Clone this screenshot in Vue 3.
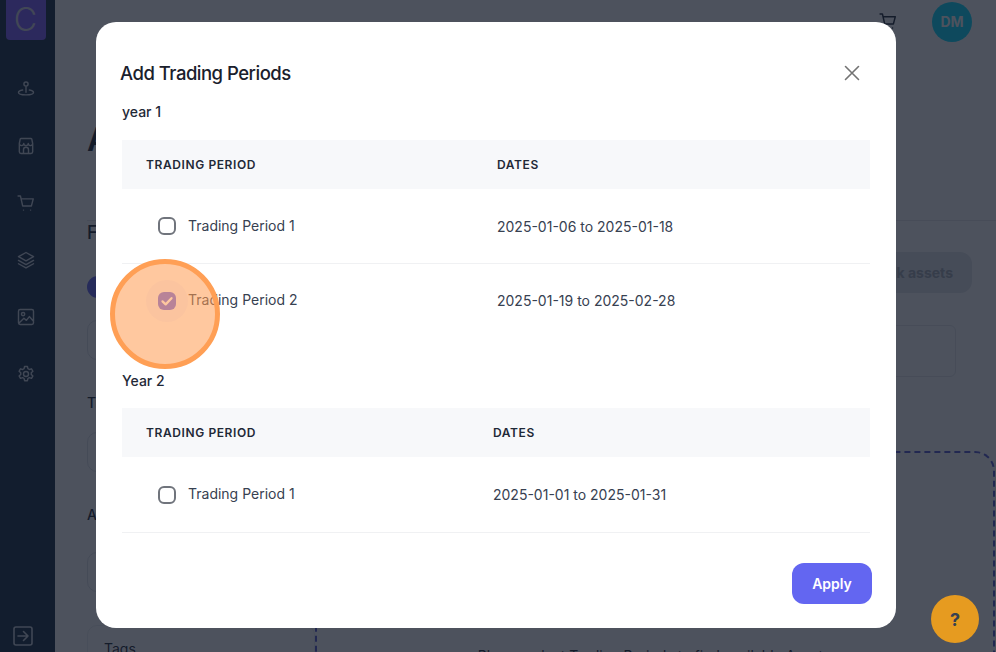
<script setup>
const navIcons = [
  'M12 8.500a2.500 2.500 0 1 0 0-5 2.500 2.500 0 0 0 0 5zM12 8.500V16M8 13.200c-2.900.5-5 1.600-5 2.900C3 17.700 7 19 12 19s9-1.300 9-2.900c0-1.300-2.100-2.400-5-2.900',
  'M4 9V19a2 2 0 0 0 2 2h12a2 2 0 0 0 2-2V9M4 9l1-5a1 1 0 0 1 1-1h12a1 1 0 0 1 1 1l1 5M4 9c0 1.500 1.200 2.500 2.700 2.500S9.300 10.500 9.300 9c0 1.500 1.200 2.500 2.700 2.500S14.700 10.500 14.700 9c0 1.500 1.100 2.500 2.600 2.500S20 10.500 20 9M9 21v-4.500a3 3 0 0 1 6 0V21',
  'M2.500 3.500h2.800L8 15.500h10.500l2.200-8.500H6M9 20.500h.01M17.500 20.500h.01',
  'M12 3l9 5-9 5-9-5 9-5zM3 12.500l9 5 9-5M3 16.500l9 5 9-5',
  'M5 3h14a2 2 0 0 1 2 2v14a2 2 0 0 1-2 2H5a2 2 0 0 1-2-2V5a2 2 0 0 1 2-2zM8.500 10.500a2 2 0 1 0 0-4 2 2 0 0 0 0 4zM4 19l5.500-5.500 3 2.500 3.500-4.500 5 5.500',
  'M12 15a3 3 0 1 0 0-6 3 3 0 0 0 0 6zM10.300 3h3.400l.6 2.600 1.700 1 2.600-.8 1.700 2.900-2 1.800v2l2 1.800-1.700 2.900-2.600-.8-1.700 1-.6 2.600h-3.400l-.6-2.600-1.700-1-2.600.8-1.700-2.900 2-1.800v-2l-2-1.800 1.700-2.900 2.600.8 1.700-1z'
]

const groups = [
  {
    title: 'year 1',
    nameWidth: '375px',
    rows: [
      { name: 'Trading Period 1', dates: '2025-01-06 to 2025-01-18', checked: false, line: true },
      { name: 'Trading Period 2', dates: '2025-01-19 to 2025-02-28', checked: true, line: false }
    ]
  },
  {
    title: 'Year 2',
    nameWidth: '371px',
    rows: [
      { name: 'Trading Period 1', dates: '2025-01-01 to 2025-01-31', checked: false, line: true }
    ]
  }
]
</script>

<template>
  <div class="page">
    <aside class="sidebar">
      <div class="logo">C</div>
      <svg v-for="(d, i) in navIcons" :key="i" class="nav-icon" viewBox="0 0 24 24">
        <path :d="d" />
      </svg>
      <svg class="collapse-icon" viewBox="0 0 24 24">
        <rect x="3" y="3" width="18" height="18" rx="2" />
        <path d="M7 12h10M12.500 7.500L17 12l-4.500 4.500" />
      </svg>
    </aside>

    <main class="main">
      <header class="topbar">
        <svg class="cart" viewBox="0 0 24 24">
          <path d="M2.500 3.500h2.800L8 15.500h10.500l2.200-8.500H6M9 20.500h.01M17.500 20.500h.01" />
        </svg>
        <div class="avatar">DM</div>
      </header>

      <h1 class="page-title">Add Assets</h1>
      <div class="divider"></div>

      <div class="content">
        <section class="filters">
          <h2 class="filter-title">Filters</h2>
          <div class="pill"></div>
          <div class="field"></div>
          <p class="field-label">Trading Period</p>
          <div class="field"></div>
          <p class="field-label second">Asset Type</p>
          <div class="field"></div>
          <div class="tags-box">Tags</div>
        </section>

        <section class="results">
          <div class="bulk-row"><button class="bulk">Bulk assets</button></div>
          <div class="search-card"></div>
          <div class="dashed">
            <p>Please select Trading Periods to find available Assets</p>
          </div>
        </section>
      </div>
    </main>

    <div class="overlay">
      <div class="modal">
        <div class="modal-head">
          <h3>Add Trading Periods</h3>
          <svg class="close" viewBox="0 0 16 16"><path d="M1.500 1.500l13 13M14.500 1.500l-13 13" /></svg>
        </div>

        <div v-for="group in groups" :key="group.title" class="group">
          <div class="group-title">{{ group.title }}</div>
          <div class="thead">
            <div class="th" :style="{ width: group.nameWidth }">TRADING PERIOD</div>
            <div class="th">DATES</div>
          </div>
          <div v-for="row in group.rows" :key="row.name" class="row" :class="{ line: row.line }">
            <div class="cell-name" :style="{ width: group.nameWidth }">
              <span class="check" :class="{ on: row.checked }">
                <svg v-if="row.checked" viewBox="0 0 16 16"><path d="M4 8.300l2.800 2.700L12 5.500" /></svg>
              </span>
              <span>{{ row.name }}</span>
            </div>
            <div class="cell-dates">{{ row.dates }}</div>
          </div>
        </div>

        <div class="modal-foot">
          <button class="apply">Apply</button>
        </div>
      </div>
    </div>

    <div class="spotlight"></div>
    <button class="help">?</button>
  </div>
</template>

<style>
html, body {
  margin: 0;
  overflow: hidden;
}
</style>

<style scoped>
.page {
  position: relative;
  display: flex;
  width: 996px;
  height: 652px;
  overflow: hidden;
  background: #fff;
  font-family: Inter, "Liberation Sans", sans-serif;
  color: #1f2937;
}

/* sidebar */
.sidebar {
  flex: none;
  width: 55px;
  height: 652px;
  box-sizing: border-box;
  padding-right: 4px;
  background: #172e44;
  display: flex;
  flex-direction: column;
  align-items: center;
  position: relative;
}
.logo {
  width: 40px;
  height: 40px;
  margin-bottom: 39px;
  border-radius: 0 0 4px 4px;
  background: #7c5cff;
  color: #d4d4e2;
  font-size: 32px;
  font-weight: 300;
  line-height: 40px;
  text-align: center;
}
.nav-icon {
  width: 20px;
  height: 20px;
  margin-bottom: 37px;
  fill: none;
  stroke: #c9d1dc;
  stroke-width: 1.700;
  stroke-linecap: round;
  stroke-linejoin: round;
}
.collapse-icon {
  position: absolute;
  left: 11px;
  top: 624px;
  width: 24px;
  height: 24px;
  fill: none;
  stroke: #c9d1dc;
  stroke-width: 1.600;
  stroke-linecap: round;
  stroke-linejoin: round;
}

/* page behind the dialog */
.main {
  flex: 1;
  min-width: 0;
}
.topbar {
  height: 44px;
  display: flex;
  justify-content: flex-end;
  align-items: center;
  gap: 34px;
  padding-right: 24px;
}
.cart {
  width: 20px;
  height: 20px;
  margin-top: -2px;
  fill: none;
  stroke: #1f2937;
  stroke-width: 1.800;
  stroke-linecap: round;
  stroke-linejoin: round;
}
.avatar {
  width: 40px;
  height: 40px;
  border-radius: 50%;
  background: #04dcff;
  color: #fff;
  font-size: 14px;
  font-weight: 700;
  line-height: 40px;
  text-align: center;
}
.page-title {
  margin: 0;
  padding: 80px 0 0 32px;
  font-size: 32px;
  font-weight: 600;
  line-height: 32px;
}
.divider {
  margin: 10px 0 0 32px;
  height: 54px;
  border-bottom: 1px solid #e5e7eb;
}
.content {
  display: flex;
  padding-left: 32px;
}
.filters {
  flex: none;
  width: 228px;
}
.filter-title {
  margin: 0;
  font-size: 18px;
  font-weight: 500;
  line-height: 24px;
}
.pill {
  width: 120px;
  height: 22px;
  margin-top: 31px;
  border-radius: 11px;
  background: #6366f1;
}
.field {
  height: 40px;
  margin-top: 22px;
  border: 1px solid #dfe2e7;
  border-radius: 10px;
  box-sizing: border-box;
}
.field-label {
  margin: 33px 0 0;
  font-size: 14px;
  font-weight: 500;
  line-height: 20px;
}
.field-label + .field {
  margin-top: 19px;
}
.field-label.second {
  margin-top: 33px;
}
.field-label.second + .field {
  margin-top: 27px;
}
.tags-box {
  margin-top: 33px;
  height: 40px;
  padding: 14px 16px 0;
  box-sizing: border-box;
  border: 1px solid #eceef1;
  border-radius: 10px;
  font-size: 14px;
}
.results {
  flex: 1;
  min-width: 0;
  padding-top: 31px;
}
.bulk-row {
  display: flex;
  justify-content: flex-end;
  padding-right: 24px;
}
.bulk {
  height: 41px;
  padding: 0 19px;
  border: 0;
  border-radius: 12px;
  background: #e2e5ea;
  color: #a4aab4;
  font: 700 14px Inter, sans-serif;
}
.search-card {
  height: 52px;
  margin: 32px 40px 0 0;
  border: 1px solid #e5e7eb;
  border-radius: 6px;
  box-sizing: border-box;
}
.dashed {
  margin-top: 74px;
  height: 300px;
  width: 680px;
  padding-right: 2px;
  border: 2px dashed #5558d0;
  border-radius: 20px;
  box-sizing: border-box;
  text-align: center;
  font-size: 14px;
}
.dashed p {
  margin: 0;
  padding-top: 194px;
}

/* dialog */
.overlay {
  position: absolute;
  inset: 0;
  background: rgba(17, 24, 39, 0.75);
}
.modal {
  position: absolute;
  left: 96px;
  top: 22px;
  width: 800px;
  height: 606px;
  box-sizing: border-box;
  padding: 32px 26px 24px 26px;
  border-radius: 20px;
  background: #fff;
  display: flex;
  flex-direction: column;
}
.modal-head {
  display: flex;
  justify-content: space-between;
  align-items: center;
  height: 38px;
  margin-left: -2px;
  padding-right: 10px;
}
.modal-head h3 {
  margin: 0;
  font-size: 18.500px;
  font-weight: 500;
  letter-spacing: -0.5px;
  color: #1a202c;
}
.close {
  width: 16px;
  height: 16px;
  fill: none;
  stroke: #737373;
  stroke-width: 1.600;
  stroke-linecap: round;
}
.group-title {
  height: 38px;
  padding-top: 10px;
  font-size: 14px;
  font-weight: 500;
  line-height: 20px;
  color: #1f2937;
}
.group + .group {
  margin-top: 24px;
}
.group + .group .group-title {
  height: 37px;
}
.group + .group .row.line {
  height: 76px;
}
.thead {
  display: flex;
  height: 49px;
  align-items: center;
  background: #f7f8fa;
}
.th {
  box-sizing: border-box;
  font-size: 12px;
  font-weight: 600;
  letter-spacing: 0.6px;
  color: #1f2937;
}
.th:first-child {
  padding-left: 24px;
}
.row {
  display: flex;
  height: 73px;
  align-items: center;
  font-size: 14px;
  color: #374151;
}
.row.line {
  height: 75px;
  border-bottom: 1px solid #f0f1f3;
  box-sizing: border-box;
}
.cell-name {
  display: flex;
  align-items: center;
  gap: 12px;
  padding-left: 36px;
  box-sizing: border-box;
  margin-top: -2px;
}
.check {
  position: relative;
  flex: none;
  width: 18px;
  height: 18px;
  box-sizing: border-box;
  border: 2px solid #70747c;
  border-radius: 6px;
  margin-top: 2px;
}
.check.on {
  border: 0;
  background: #6366f1;
}
.check.on::before {
  content: "";
  position: absolute;
  left: -12px;
  top: -12px;
  width: 42px;
  height: 42px;
  border-radius: 50%;
  background: rgba(99, 102, 241, 0.06);
}
.check svg {
  position: relative;
  display: block;
  width: 18px;
  height: 18px;
  fill: none;
  stroke: #fff;
  stroke-width: 2;
  stroke-linecap: round;
  stroke-linejoin: round;
}
.modal-foot {
  margin: auto -2px 0 0;
  display: flex;
  justify-content: flex-end;
}
.apply {
  width: 80px;
  height: 41px;
  border: 0;
  border-radius: 12px;
  background: #6366f1;
  color: #fff;
  font: 600 14px Inter, sans-serif;
}

/* overlays on top of the dialog */
.spotlight {
  position: absolute;
  left: 110px;
  top: 259px;
  width: 110px;
  height: 110px;
  box-sizing: border-box;
  border: 5px solid #ff9f55;
  border-radius: 50%;
  background: rgba(255, 155, 80, 0.55);
}
.help {
  position: absolute;
  left: 931px;
  top: 595px;
  width: 48px;
  height: 48px;
  border: 0;
  border-radius: 50%;
  background: #e69b20;
  color: #374151;
  font: 700 18px Inter, sans-serif;
}
</style>
